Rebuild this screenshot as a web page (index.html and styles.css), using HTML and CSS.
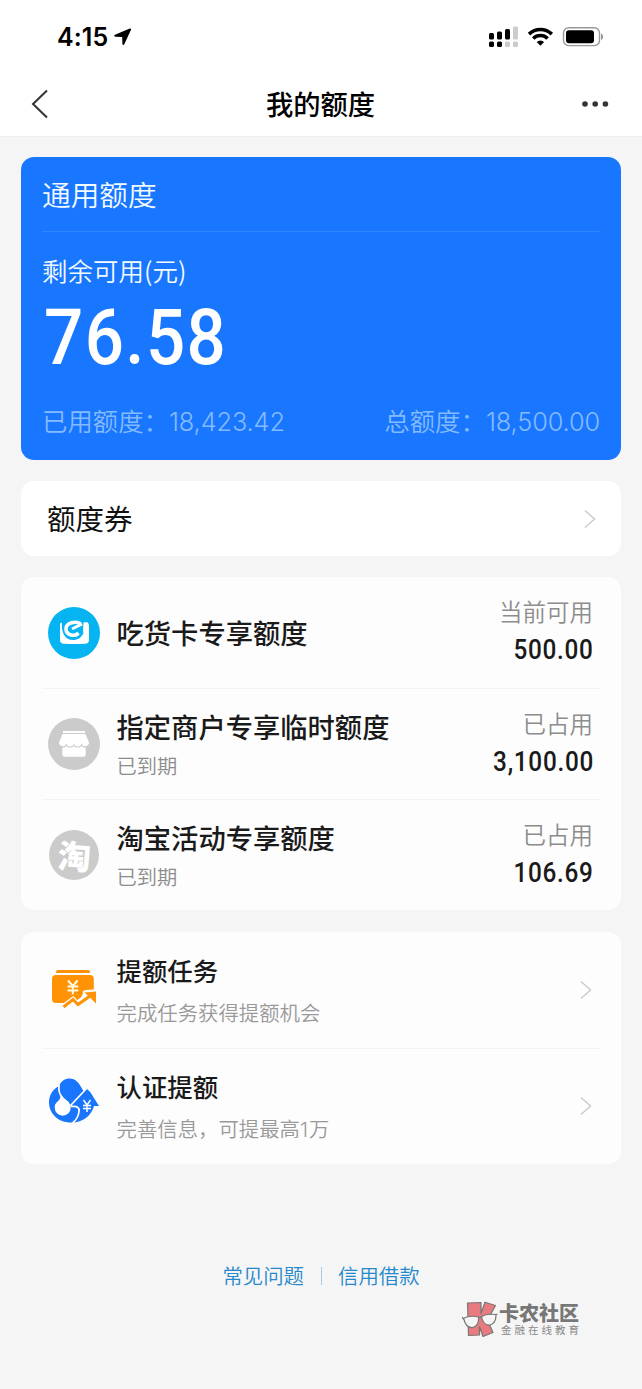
FILE: index.html
```html
<!DOCTYPE html>
<html lang="zh-CN">
<head>
<meta charset="utf-8">
<title>我的额度</title>
<link rel="stylesheet" href="styles.css">
</head>
<body>
<header class="top">
  <div class="status">
    <span class="time">4:15</span>
    <svg class="loc" width="18" height="18" viewBox="0 0 18 18"><path d="M15.800.6 1 6.800c-1.300.6-1 1.900.3 1.900l6.900.3.2 6.900c.1 1.400 1.500 1.500 2 .2L17 1.700c.4-.9-.3-1.500-1.200-1.100Z"/></svg>
    <svg class="signal" width="116" height="24" viewBox="0 0 116 24">
      <g><rect x="1" y="8" width="5" height="6.500" rx="1.500"/><rect x="9" y="6.500" width="5" height="8" rx="1.500"/><rect x="17" y="4" width="5" height="10.500" rx="1.500"/><rect x="1" y="16.500" width="5" height="5.500" rx="1.500"/><rect x="9" y="16.500" width="5" height="5.500" rx="1.500"/></g>
      <g fill="#ccc"><rect x="25" y="1.500" width="5" height="13" rx="1.500"/><rect x="17" y="16.500" width="5" height="5.500" rx="1.500"/><rect x="25" y="16.500" width="5" height="5.500" rx="1.500"/></g>
      <g fill="none" stroke="#000" stroke-width="3.600"><path d="M41 9.100a16.300 16.300 0 0 1 22.800 0"/><path d="M45.200 13.500a10.300 10.300 0 0 1 14.400 0"/></g>
      <path d="M48.700 17.100a5.300 5.300 0 0 1 7.400 0L52.400 20.800Z"/>
      <rect x="75.500" y="2.800" width="36" height="17.800" rx="5.200" fill="none" stroke="#999" stroke-width="1.400"/>
      <rect x="78" y="5.200" width="28" height="13" rx="3"/>
      <path d="M113 8.500c2.800 1 2.800 5.500 0 6.500Z" fill="#999"/>
    </svg>
  </div>
  <nav class="nav">
    <svg width="20" height="32" viewBox="0 0 20 32"><path d="M17 2.500 3 16l14 13.500" fill="none" stroke="#333" stroke-width="2"/></svg>
    <h1>我的额度</h1>
    <svg width="28" height="8" viewBox="0 0 28 8" fill="#333"><circle cx="4" cy="4" r="2.800"/><circle cx="14.200" cy="4" r="2.800"/><circle cx="24.400" cy="4" r="2.800"/></svg>
  </nav>
</header>

<main class="content">
  <section class="hero">
    <h2>通用额度</h2>
    <p class="hero-label">剩余可用(元)</p>
    <p class="hero-amount">76.58</p>
    <div class="hero-foot">
      <p>已用额度：<span>18,423.42</span></p>
      <p>总额度：<span>18,500.00</span></p>
    </div>
  </section>

  <section class="card coupon">
    <span>额度券</span>
    <svg class="chev" width="12" height="20" viewBox="0 0 12 20"><path d="m1 1.500 9.500 8.500L1 18.500"/></svg>
  </section>

  <section class="card quotas">
    <div class="row">
      <svg class="icon" width="52" height="52" viewBox="0 0 52 52"><circle cx="26" cy="26" r="26" fill="#06b4f2"/><path fill="#fff" d="M12 17q0-1.500 2.500-1.500H38q3 0 3 3V33q0 3.500-4 3.700-10.500.6-21 0-4-.2-4-3.700Z"/><path fill="#06b4f2" d="M14 14.500h21.500L35 26c-1.500 5-5.500 7-10 7C17 33 13 26 14 14.500Z"/><path fill="none" stroke="#fff" stroke-width="3.600" d="M32.500 16.800c-4.500-3.300-14.500-1-14.500 5 0 6.500 9 8.500 12.500 4"/><path fill="none" stroke="#fff" stroke-width="3" d="m24 22 10-5.200"/><circle cx="33.300" cy="25.500" r="2.400" fill="#06b4f2"/><path fill="#fff" d="m35.500 20 1-4.500H40V27h-4.500Z"/></svg>
      <div class="names"><h3>吃货卡专享额度</h3></div>
      <div class="figures"><span>当前可用</span><b>500.00</b></div>
    </div>
    <div class="row">
      <svg class="icon" width="52" height="52" viewBox="0 0 52 52"><circle cx="26" cy="26" r="26" fill="#cbcbcb"/><g fill="#fff"><path d="M15 13h22v2H15zM14.500 16h23l3.500 8.500a3.800 3.800 0 0 1-7.500.7 3.800 3.800 0 0 1-7.500 0 3.800 3.800 0 0 1-7.500 0 3.800 3.800 0 0 1-7.500-.7Z"/><path d="M14.300 29.500c2 0 3.200-.5 4.200-1.500 2.200 2 5.300 2 7.500 0 2.200 2 5.300 2 7.500 0 1 1 2.200 1.500 4.200 1.500v7q0 2.300-2.300 2.300H16.600q-2.300 0-2.300-2.300Z"/></g></svg>
      <div class="names"><h3>指定商户专享临时额度</h3><p>已到期</p></div>
      <div class="figures"><span>已占用</span><b>3,100.00</b></div>
    </div>
    <div class="row">
      <div class="icon tao"><span>淘</span></div>
      <div class="names"><h3>淘宝活动专享额度</h3><p>已到期</p></div>
      <div class="figures"><span>已占用</span><b>106.69</b></div>
    </div>
  </section>

  <section class="card tasks">
    <div class="row">
      <svg class="icon task" width="52" height="52" viewBox="0 0 52 52"><path fill="#ff9205" d="M9.500 7h31q1.500 0 1.500 3H8Q8 7 9.500 7ZM8 12h34q3.800 0 3.800 4v10.500l-8 .5-3 1v3l-2 3.500-3.500 2.500-4-4-9.500 7H8q-4 0-4-4V16q0-4 4-4Z"/><path fill="none" stroke="#ff9205" stroke-width="3" d="m15.500 44 9.500-7.500 5 5L43.500 32"/><path fill="#ff9205" d="m36.500 29.500 11.500-1v12l-4.500-4.500Z"/><path fill="none" stroke="#fffbe0" stroke-width="2" d="m20 17.500 4.800 5.500 4.800-5.500M24.800 23v8.500M19.500 23.500h10.800M19.500 27.500h10.800"/></svg>
      <div class="names"><h3>提额任务</h3><p>完成任务获得提额机会</p></div>
      <svg class="chev" width="12" height="20" viewBox="0 0 12 20"><path d="m1 1.500 9.500 8.500L1 18.500"/></svg>
    </div>
    <div class="row">
      <svg class="icon drop" width="52" height="52" viewBox="0 0 52 52"><path fill="#1976fc" d="M11 8C13.500 2.500 17 .5 21.500.5c6 0 9 3.500 14 12.500l3.500-2 3.200 3L51 28h-5c-2.500 9.500-11 16.500-22 16.500C11 45 1 36 1 24.500 1 18 4 11.500 11 8Z"/><circle cx="14.700" cy="29.700" r="8" fill="#fff"/><path fill="#fff" d="M12.500 17.500c1.500 4.500 7 5.500 9 8l-6 5-8.500-2c.5-5 5.500-5 5.500-11Z"/><path fill="none" stroke="#fff" stroke-width="1.700" d="M11.200 7c-1.500 8 2 12.500 9.300 18M38.500 10.500 23 27l1 1.500c5-.5 7.500 1 7 5-.5 4.500-2 8-6.500 11.500"/></svg>
      <svg class="yuan" width="10" height="14" viewBox="0 0 10 14"><path d="m1.500 1 3.500 5 3.500-5M5 6v7M1 6.500h8M1 9.500h8" fill="none" stroke="#fff" stroke-width="1.500"/></svg>
      <div class="names"><h3>认证提额</h3><p>完善信息，可提最高<span class="one">1</span>万</p></div>
      <svg class="chev" width="12" height="20" viewBox="0 0 12 20"><path d="m1 1.500 9.500 8.500L1 18.500"/></svg>
    </div>
  </section>
</main>

<footer class="links"><a>常见问题</a><i></i><a>信用借款</a></footer>

<div class="mark">
  <svg width="36" height="37" viewBox="0 0 36 37"><path fill="#e77b80" stroke="#777" stroke-width="1.200" stroke-linejoin="round" d="M5.500 2 19 1.500v11l4-11.300 10.500 3.300L25.500 19 31 31.500l-10 4-3.500-10V34l-11 .5Z"/><path fill="#f5f5f5" stroke="#777" stroke-width="1.200" d="M1 17.500q7-3.500 15.500-1.500.8 9-6 10.500-6.500.5-8.500-8ZM19.500 15.500q5-3 14.500-2 .2 9-6 10.500-7 .5-8.500-8.500ZM16.500 17l3-1M1 17.500 0 16M34 13.500l1.500-.5"/></svg>
  <div class="mark-text"><strong>卡农社区</strong><span>金融在线教育</span></div>
</div>
</body>
</html>
```
FILE: styles.css
```css
* { box-sizing: border-box; margin: 0; padding: 0; }
body {
  position: relative;
  height: 1389px;
  overflow: hidden;
  background: #f5f5f5;
  color: #1a1a1a;
  font-family: Inter, "Noto Sans CJK SC", sans-serif;
  white-space: nowrap;
}
h1, h2, h3 { font-weight: 500; }
h1, h2, h3, p, .coupon span, .figures span, .links a { font-family: "Noto Sans CJK SC", sans-serif; }
svg { display: block; flex: none; }

.top { height: 137px; background: #fff; border-bottom: 1px solid #efefef; }
.status { display: flex; align-items: center; height: 71px; padding: 3px 38px 0 57px; color: #000; }
.time { font-size: 25px; font-weight: 600; letter-spacing: .1px; }
.loc { margin-left: 6px; }
.signal { margin-left: auto; }
.nav { display: flex; align-items: center; justify-content: space-between; height: 65px; padding: 0 33px 0 30px; }
.nav h1 { margin: -2px 0 0 10px; font-size: 27.300px; line-height: 40px; color: #000; }

.content { display: flex; flex-direction: column; gap: 21px; padding: 20px 21px 0; }
.hero { height: 303px; padding: 0 21px; border-radius: 13px; background: #1976ff; color: #f2fbff; }
.hero h2 { height: 75px; font-size: 28.700px; font-weight: 350; line-height: 74px; border-bottom: 1px solid #3086ff; }
.hero-label { margin-top: 18px; font-size: 25.500px; font-weight: 350; line-height: 40px; }
.hero-amount { width: max-content; height: 90px; margin: 2px 0 0 2px; font-family: Roboto, sans-serif; font-size: 78.500px; font-weight: 500; line-height: 90px; letter-spacing: 1.600px; color: #fff; transform: scaleX(.88); transform-origin: left; }
.hero-foot { display: flex; justify-content: space-between; margin-top: 18px; font-size: 25.400px; line-height: 40px; color: #84bbff; }
.hero-foot p { font-weight: 350; }
.hero-foot span { font-family: Inter, sans-serif; font-size: 25.300px; font-weight: 300; letter-spacing: -.1px; }

.card { border-radius: 13px; background: #fdfdfd; }
.coupon { display: flex; align-items: center; justify-content: space-between; height: 75px; padding: 0 25px 0 26px; background: #fff; font-size: 28.500px; color: #111; }
.coupon span { margin-top: -2px; }
.chev { fill: none; stroke: #ccc; stroke-width: 1.500; }
.row { position: relative; display: flex; align-items: center; margin: 0 21px; padding-left: 6px; }
.row + .row { border-top: 1px solid #f3f3f3; }
.icon { width: 52px; height: 52px; margin-right: 16.500px; flex: none; }
.names { flex: 1; margin-top: -2px; }
.quotas .row { height: 111px; padding-right: 7px; }
.quotas h3 { font-size: 27.300px; line-height: 40px; }
.quotas p { font-size: 20.300px; font-weight: 350; line-height: 30px; margin-top: 4px; color: #8c8c8c; }
.figures { display: flex; flex-direction: column; align-items: flex-end; margin-top: -3px; }
.figures span { font-size: 23.500px; font-weight: 350; line-height: 36px; color: #8c8c8c; }
.figures b { margin: 2px -.8px 0 0; font-family: Roboto, sans-serif; font-size: 27.500px; font-weight: 500; line-height: 38px; letter-spacing: .8px; transform: scaleX(.885); transform-origin: right; }
.tao { display: grid; place-items: center; width: 50px; height: 50px; margin: 0 17.500px 0 1px; border-radius: 50%; background: #cbcbcb; color: #fff; font: 900 33px/48px "Noto Sans CJK SC", sans-serif; }
.tao span { transform: rotate(4deg); }
.tasks { margin-top: .5px; }
.tasks .row { height: 116px; padding-right: 8px; }
.tasks h3 { font-size: 25.400px; line-height: 38px; }
.tasks p { font-size: 20.400px; font-weight: 350; line-height: 30px; margin-top: 8px; color: #999; }
.tasks .row + .row .names { margin-top: 0; }
.tasks .task { margin-top: -2px; }
.tasks .drop { margin-top: -4px; }
.yuan { position: absolute; left: 40px; top: 50px; }
.one { display: inline-block; width: 9px; font-family: Inter, sans-serif; font-weight: 300; }

.links { display: flex; justify-content: center; align-items: center; height: 30px; margin-top: 97px; font-size: 20.400px; color: #2588cb; }
.links a { margin-top: -1px; font-weight: 350; }
.links i { width: 1px; height: 18px; margin: 0 16px 0 17px; background: #a6cbe6; }

.mark { position: absolute; left: 462px; top: 1301px; display: flex; }
.mark-text { display: flex; flex-direction: column; margin-left: 1px; font-family: "Noto Sans CJK SC", sans-serif; color: #777; }
.mark-text strong { font-size: 20px; font-weight: 900; line-height: 23px; }
.mark-text span { margin-left: 2px; font-size: 10.500px; line-height: 12px; letter-spacing: 3px; color: #888; }
```
